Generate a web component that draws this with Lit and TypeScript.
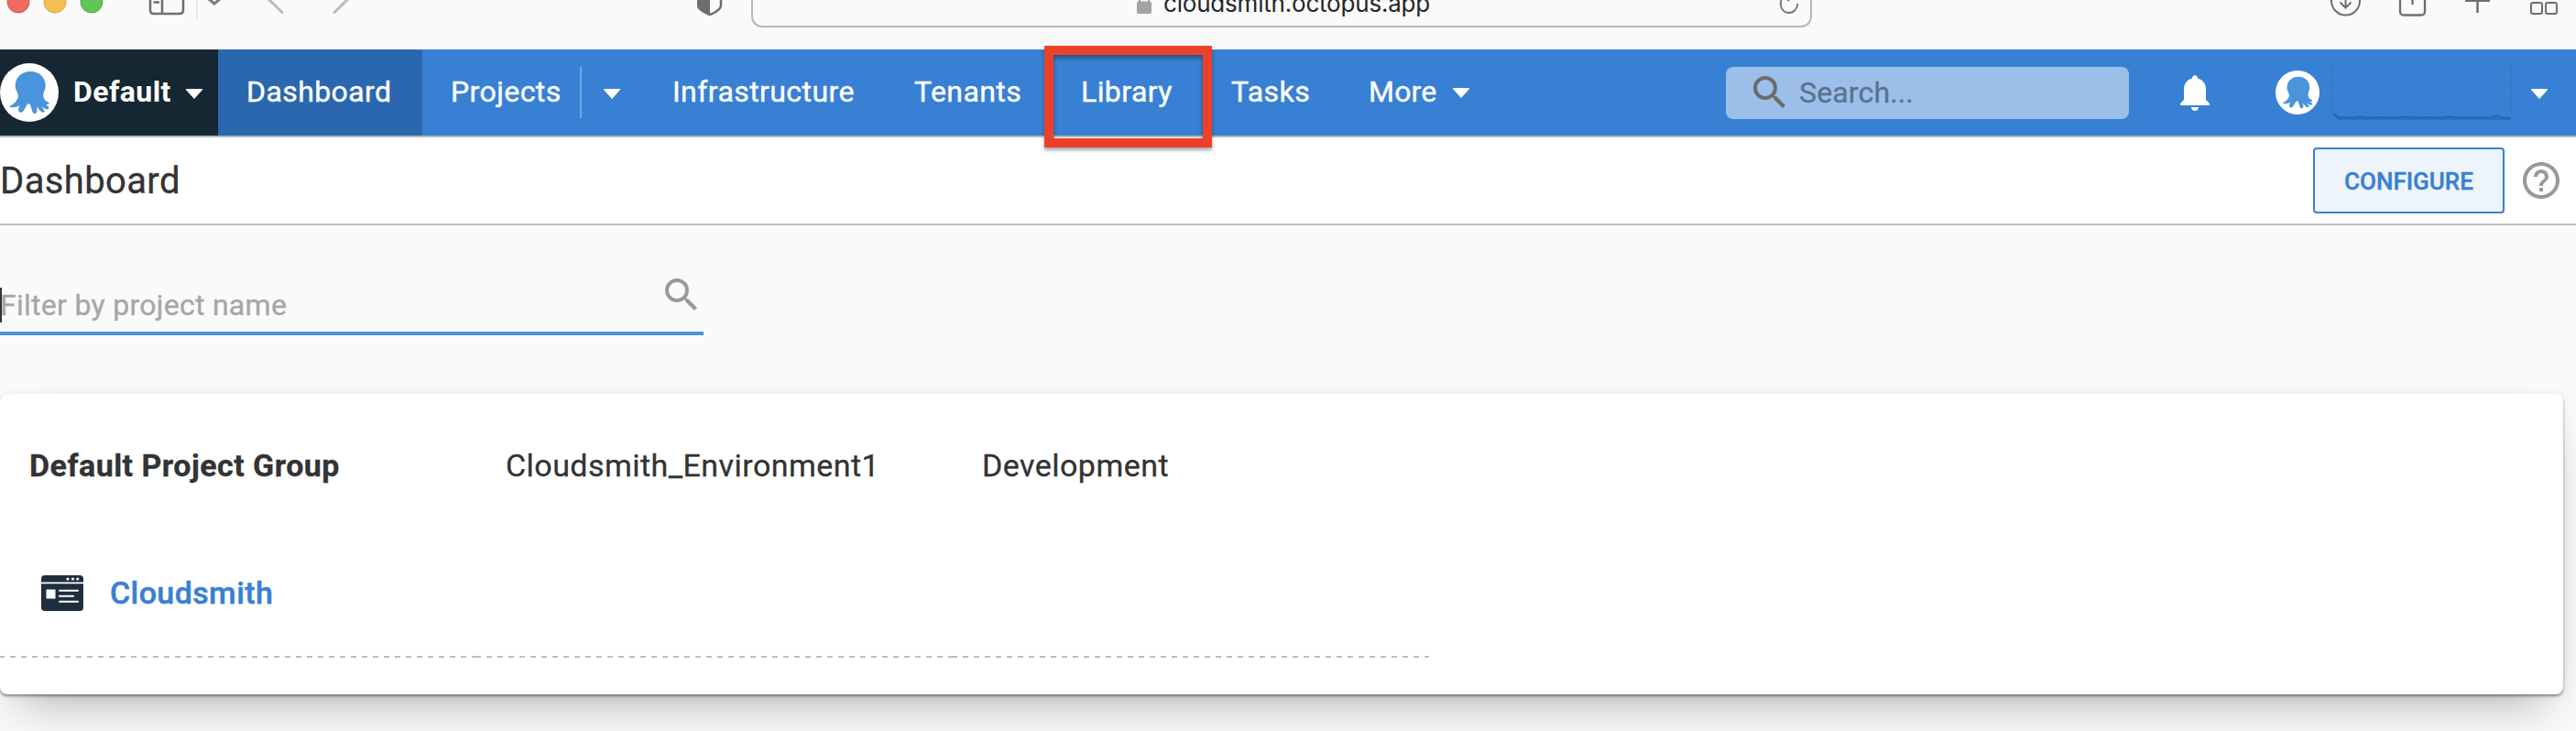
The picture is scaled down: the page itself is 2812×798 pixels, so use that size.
import { LitElement, html, css, svg } from "lit";
import { customElement } from "lit/decorators.js";

const octopus = svg`<path fill="#4a94dc" d="M33.300 9C43 9 49.700 15.500 49.700 24.500C49.700 29 47.200 31.500 47.300 35.500C47.500 39.500 50.500 42 53.700 43L53.300 44.500L50 45.200C51.300 46 54 48 53.600 49C51.500 51.500 47.500 49.500 46 47C46 49.500 49.500 52 48.600 53.300C45.500 55.300 42.500 50 40.300 47.500C40.300 50.500 41.500 54.800 37.800 55C34.500 54.800 35 49 32.800 45C32 44 30.500 44 29.500 45.500C27.500 48.500 25 55.500 21.500 53.500C19 52 20.500 48.500 21.300 46.300C18.500 48 13 49.500 10 47C14.500 45.500 19.500 40.500 19.800 36.500C20 32 16.700 30 16.700 24.500C16.700 15.500 23.500 9 33.300 9Z"/>`;

const magnifier = svg`<path d="M15.500 14h-.79l-.28-.27A6.471 6.471 0 0 0 16 9.500 6.500 6.500 0 1 0 9.500 16c1.610 0 3.090-.59 4.230-1.570l.27.28v.79l5 4.990L20.490 19l-4.990-5zm-6 0C7.010 14 5 11.990 5 9.500S7.010 5 9.500 5 14 7.010 14 9.500 11.990 14 9.500 14z"/>`;

const caret = html`<svg class="caret" viewBox="0 0 18 11"><path fill="#fff" d="M0 0H18V1L9 11L0 1Z"/></svg>`;

const dashes = html`<svg class="dashed" width="520" height="2"><path stroke="#bdbdbd" stroke-width="2" stroke-dasharray="6 6" stroke-dashoffset="1" d="M0 1H520"/></svg>`;

@customElement("safari-toolbar")
export class SafariToolbar extends LitElement {
  static styles = css`
    :host { display: block; height: 54px; overflow: hidden; background: #fafafa; }
    .bar { display: flex; align-items: flex-start; height: 54px; }
    svg { display: block; flex: none; fill: none; stroke: #6e6e6e; }
    .address {
      box-sizing: border-box; display: flex; width: 1158px; height: 30px; flex: none;
      border: 2px solid #b8b8b8; border-top: 0; border-radius: 0 0 12px 12px;
      font: 26px/32px Inter, "Liberation Sans", sans-serif; color: #262626;
    }
    .lock { margin-left: 419px; }
    .host { width: 300px; margin: -12px 0 0 13px; white-space: nowrap; letter-spacing: -0.2px; }
    .reload { margin-left: auto; margin-right: 10px; }
  `;
  render() {
    return html`<div class="bar">
      <svg width="820" height="30" viewBox="0 0 820 30">
        <circle cx="20" cy="2" r="12" fill="#ed6b60" stroke="#d3544b"/>
        <circle cx="60" cy="2" r="12" fill="#f5bf4f" stroke="#d7a243"/>
        <circle cx="100" cy="2" r="12" fill="#62c655" stroke="#52a842"/>
        <path stroke-width="2.500" d="M164 -8V11Q164 15 168 15H196Q200 15 200 11V-8M177 -8V15M167.500 2.500H174"/>
        <path stroke="#e7e7e7" stroke-width="2" d="M215 0V20"/>
        <path stroke="#808080" stroke-width="3.200" d="M228 -1L234 4L240 -1"/>
        <path stroke="#bcbcbc" stroke-width="3" stroke-linecap="round" d="M291 -3L308 13.500M382 -3L365 13.500"/>
        <path fill="#6e6e6e" stroke="none" d="M761 0H775V17.500Q761 11.500 761 7Z"/>
        <path stroke-width="2.500" d="M787 -2V6Q787 11 774.700 16.200"/>
      </svg>
      <div class="address">
        <svg class="lock" width="16" height="16" viewBox="0 0 16 16"><path stroke="#a3a3a3" stroke-width="2.200" d="M3 3V0M13 3V0"/><rect y="1.500" width="16" height="13.500" rx="2" fill="#a3a3a3" stroke="none"/></svg>
        <span class="host">cloudsmith.octopus.app</span>
        <svg class="reload" width="26" height="20" viewBox="0 0 26 20"><path stroke-width="1.800" d="M5 -1C1.500 6 6 14 12.500 14C18 14 22.200 9.500 22.200 4"/><path stroke-width="2" d="M11 -1L13 1"/></svg>
      </div>
      <svg width="834" height="30" viewBox="1978 0 834 30">
        <circle cx="2560.500" cy="1" r="15.500" stroke-width="2"/>
        <path stroke-width="2" d="M2560.500 0V8M2554.500 2.500L2560.500 8.500L2566.500 2.500"/>
        <path stroke-width="2.300" d="M2620 -3V12.500Q2620 16.500 2624 16.500H2643Q2647 16.500 2647 12.500V-3M2633.500 0V5"/>
        <path stroke-width="2.500" d="M2691 .7H2718M2704.500 0V14"/>
        <rect x="2763" y="3" width="12" height="12" rx="2" stroke-width="2"/>
        <rect x="2779" y="3" width="12" height="12" rx="2" stroke-width="2"/>
      </svg>
    </div>`;
  }
}

@customElement("octopus-nav")
export class OctopusNav extends LitElement {
  static styles = css`
    :host { display: block; font: 500 32px/94px Roboto, sans-serif; letter-spacing: .42px; color: #fff; }
    .nav { display: flex; align-items: center; height: 94px; background: #3880d3; border-bottom: 2px solid #b8b8b8; white-space: nowrap; }
    .space { display: flex; align-items: center; box-sizing: border-box; width: 238px; height: 94px; background: #152733; font-weight: 700; }
    svg { display: block; flex: none; }
    .caret { width: 18px; height: 11px; }
    .space .caret { margin: 2px 0 0 18px; }
    .space-name { width: 105px; height: 94px; margin: -2px 0 0 16px; }
    .item { flex: none; font-weight: 400; -webkit-text-stroke: .4px #fff; position: relative; top: -1px; }
    .active { box-sizing: border-box; width: 223px; height: 94px; padding-left: 31px; background: #2b67ae; }
    .projects { width: 141px; padding-left: 31px; }
    .rule { width: 2px; height: 56px; background: #74a6e0; }
    .drop { margin: 2px 0 0 24px; }
    .infra { width: 264px; padding-left: 57px; }
    .tenants { width: 182px; }
    .library-wrap { position: relative; width: 164px; }
    .highlight {
      position: absolute; left: -40px; top: -4px; box-sizing: border-box; width: 183px; height: 111px;
      border: 10px solid #eb412b;
      box-shadow: 0 3px 4px rgba(0,0,0,.35), inset 0 3px 5px rgba(0,0,0,.4);
    }
    .tasks { width: 150px; }
    .more { width: 92px; letter-spacing: .2px; }
    .search { display: flex; align-items: center; box-sizing: border-box; width: 440px; height: 57px; margin-left: auto; padding-left: 24px; border-radius: 8px; background: #9bbfe9; color: #5a7190; font-weight: 400; letter-spacing: .15px; }
    .search-text { margin-left: 8px; -webkit-text-stroke: .3px #5a7190; }
    .bell { margin-left: 56px; }
    .avatar { margin-left: 72px; }
    .name { width: 198px; height: 60px; margin-left: 13px; }
    .user-caret { display: flex; margin: 2px 31px 0 20px; }
  `;
  render() {
    return html`<div class="nav">
      <div class="space">
        <svg width="64" height="64" viewBox="0 0 64 64"><circle cx="32" cy="32" r="32" fill="#fff"/>${octopus}</svg>
        <span class="space-name">Default</span>${caret}
      </div>
      <div class="active"><span class="item">Dashboard</span></div>
      <span class="item projects">Projects</span><i class="rule"></i><div class="drop">${caret}</div>
      <span class="item infra">Infrastructure</span>
      <span class="item tenants">Tenants</span>
      <div class="library-wrap"><span class="item">Library</span><div class="highlight"></div></div>
      <span class="item tasks">Tasks</span>
      <span class="item more">More</span>${caret}
      <div class="search">
        <svg width="48" height="48" viewBox="0 0 24 24" fill="#6b6b6b">${magnifier}</svg>
        <span class="search-text">Search...</span>
      </div>
      <svg class="bell" width="32" height="39" viewBox="0 0 32 39" fill="#fff"><path d="M13 3.500C13-1 19-1 19 3.500C25 5 28 10 28 15V27L32 31V33H0V31L4 27V15C4 10 7 5 13 3.500ZM12 35H20C20 40.300 12 40.300 12 35Z"/></svg>
      <svg class="avatar" width="48" height="48" viewBox="0 0 64 64"><circle cx="32" cy="32" r="32" fill="#fff"/>${octopus}</svg>
      <svg class="name" viewBox="0 0 198 60" fill="none"><path stroke="#3475c2" stroke-width="1.500" stroke-dasharray="7 3 3 2" d="M1 2V52M196 2V54"/><path stroke="#2f70bd" stroke-width="4" d="M3 54L8 58H196"/><path stroke="#2a65ac" stroke-width="1.500" d="M1 53L4 54L8 58L13 57L22 58L32 56L40 58L53 57L65 58L82 56L94 58L107 57L118 58L128 56L142 58L156 57L168 58L181 55L187 58L196 58"/></svg>
      <div class="user-caret">${caret}</div>
    </div>`;
  }
}

@customElement("app-root")
export class AppRoot extends LitElement {
  static styles = css`
    :host { display: block; height: 798px; overflow: hidden; background: #fafafa; font: 32px/40px Roboto, sans-serif; color: #333; }
    svg { display: block; flex: none; }
    .title-bar { display: flex; align-items: center; height: 94px; background: #fff; border-bottom: 2px solid #bdbdbd; }
    .title { flex: 1; font-size: 40px; font-weight: 400; letter-spacing: .38px; margin: 1px 0 0; -webkit-text-stroke: .3px #333; }
    .configure { box-sizing: border-box; width: 209px; height: 72px; margin-right: 18px; border: 2px solid #3880d3; border-radius: 4px; background: #edf4fb; color: #3880d3; text-align: center; font: 500 26px/70px Roboto, sans-serif; -webkit-text-stroke: .4px #3880d3; }
    .help { margin-right: 16px; }
    .filter { display: flex; align-items: center; box-sizing: border-box; width: 768px; height: 86px; margin-top: 34px; padding-bottom: 6px; border-bottom: 4px solid #4a94dc; color: #a6a6a6; }
    .caret-bar { width: 2px; height: 38px; margin-top: 30px; background: #333; }
    .hint { flex: 1; padding-top: 30px; margin-left: -2px; letter-spacing: .28px; -webkit-text-stroke: .3px #a6a6a6; }
    .filter-icon { margin-top: 8px; }
    .card { box-sizing: border-box; width: 2798px; height: 328px; margin-top: 64px; border-radius: 8px; background: #fff; box-shadow: 0 28px 50px -20px rgba(0,0,0,.3), 0 2px 3px rgba(0,0,0,.4), 0 0 12px rgba(0,0,0,.06); }
    .row { display: grid; grid-template-columns: 520px 520px 520px; width: 1560px; }
    .head { height: 156px; line-height: 156px; font-size: 34px; letter-spacing: .46px; }
    .head > * { padding-left: 32px; -webkit-text-stroke: .3px #333; }
    .group { font-weight: 700; }
    .project-cell, .cell { height: 130px; }
    .project-cell { display: flex; align-items: center; box-sizing: border-box; padding: 0 0 8px 45px; color: #3880d3; font-size: 34px; font-weight: 500; letter-spacing: .4px; -webkit-text-stroke: .5px #3880d3; }
    .project { margin-left: 29px; }
  `;
  render() {
    return html`
      <safari-toolbar></safari-toolbar>
      <octopus-nav></octopus-nav>
      <div class="title-bar">
        <h1 class="title">Dashboard</h1>
        <div class="configure">CONFIGURE</div>
        <svg class="help" width="44" height="48" viewBox="1 0 22 24" fill="#999"><path d="M11 18h2v-2h-2v2zm1-16C6.480 2 2 6.480 2 12s4.480 10 10 10 10-4.480 10-10S17.520 2 12 2zm0 18c-4.410 0-8-3.590-8-8s3.590-8 8-8 8 3.590 8 8-3.590 8-8 8zm0-14c-2.210 0-4 1.790-4 4h2c0-1.100.9-2 2-2s2 .9 2 2c0 2-3 1.750-3 5h2c0-2.250 3-2.500 3-5 0-2.210-1.790-4-4-4z"/></svg>
      </div>
      <div class="filter">
        <i class="caret-bar"></i><span class="hint">Filter by project name</span>
        <svg class="filter-icon" width="48" height="48" viewBox="0 0 24 24" fill="#999">${magnifier}</svg>
      </div>
      <div class="card">
        <div class="row head"><span class="group">Default Project Group</span><span>Cloudsmith_Environment1</span><span>Development</span></div>
        <div class="row">
          <div class="project-cell">
            <svg width="46" height="39" viewBox="0 0 46 39"><rect width="46" height="39" rx="4" fill="#1f2e3f"/><path fill="#fff" d="M0 7.500H46V9.300H0ZM5.500 15.500H15.500V25.500H5.500Z"/><path stroke="#fff" stroke-width="2" stroke-linecap="round" d="M20 16.700H40M20 22.700H35M20 28.700H40"/><g fill="#fff"><circle cx="29" cy="4" r="1.600"/><circle cx="34.500" cy="4" r="1.600"/><circle cx="39.700" cy="4" r="1.600"/></g></svg>
            <span class="project">Cloudsmith</span>
          </div>
          <div class="cell"></div><div class="cell"></div>
        </div>
        <div class="row">${dashes}${dashes}${dashes}</div>
      </div>`;
  }
}
